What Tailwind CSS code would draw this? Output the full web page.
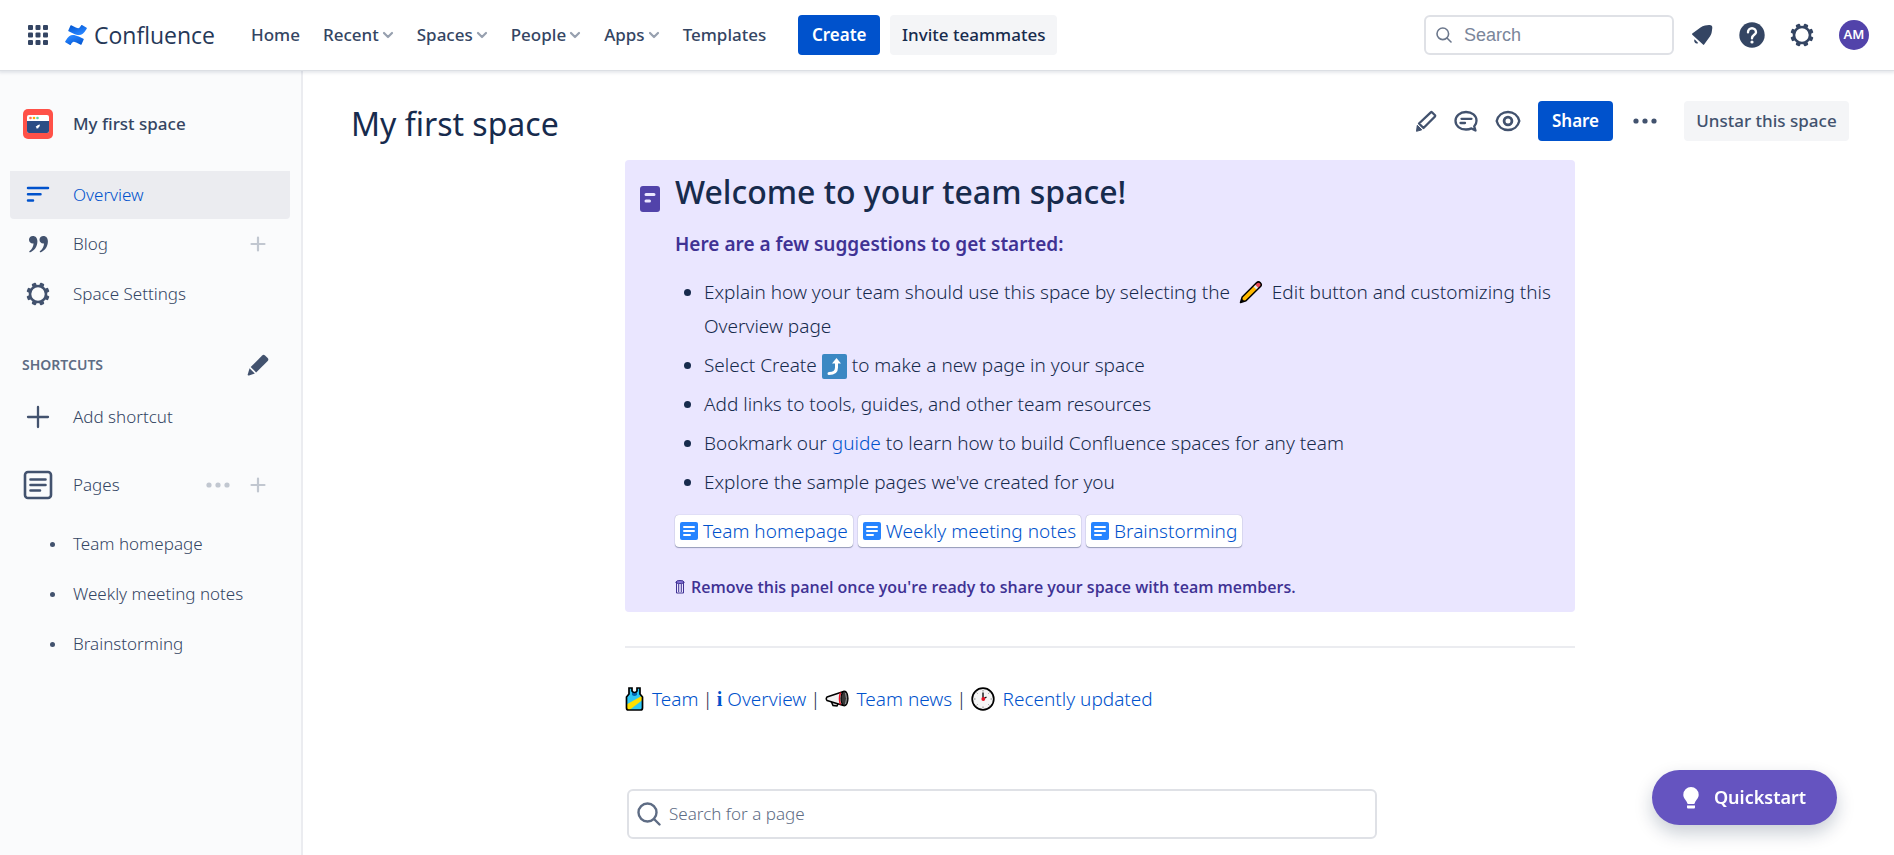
<!DOCTYPE html>
<html lang="en">
<head>
  <meta charset="UTF-8" />
  <meta name="viewport" content="width=device-width, initial-scale=1.0"/>
  <title>My first space - Confluence</title>
  <script src="https://cdn.jsdelivr.net/npm/@tailwindcss/browser@4"></script>
</head>
<body class="min-h-screen flex flex-col bg-white font-['Noto_Sans','Open_Sans',sans-serif] text-[#172B4D]">

  <!-- Shared icons -->
  <svg class="hidden" xmlns="http://www.w3.org/2000/svg">
    <symbol id="chevron" viewBox="0 0 12 12"><path d="M2 4l4 4 4-4" fill="none" stroke="currentColor" stroke-width="2.200" stroke-linecap="round" stroke-linejoin="round"/></symbol>
    <symbol id="gear" viewBox="0 0 24 24">
      <circle cx="12" cy="12" r="7.400" fill="none" stroke="currentColor" stroke-width="2.400"/>
      <g fill="currentColor">
        <rect x="9.900" y="1.300" width="4.200" height="4" rx="1" transform="rotate(22.500 12 12)"/>
        <rect x="9.900" y="1.300" width="4.200" height="4" rx="1" transform="rotate(67.500 12 12)"/>
        <rect x="9.900" y="1.300" width="4.200" height="4" rx="1" transform="rotate(112.500 12 12)"/>
        <rect x="9.900" y="1.300" width="4.200" height="4" rx="1" transform="rotate(157.500 12 12)"/>
        <rect x="9.900" y="1.300" width="4.200" height="4" rx="1" transform="rotate(202.500 12 12)"/>
        <rect x="9.900" y="1.300" width="4.200" height="4" rx="1" transform="rotate(247.500 12 12)"/>
        <rect x="9.900" y="1.300" width="4.200" height="4" rx="1" transform="rotate(292.500 12 12)"/>
        <rect x="9.900" y="1.300" width="4.200" height="4" rx="1" transform="rotate(337.500 12 12)"/>
      </g>
    </symbol>
    <symbol id="plus" viewBox="0 0 16 16"><path d="M8 1.500v13M1.500 8h13" stroke="currentColor" stroke-width="2.200" stroke-linecap="round"/></symbol>
    <symbol id="dots" viewBox="0 0 24 6"><g fill="currentColor"><circle cx="3" cy="3" r="2.600"/><circle cx="12" cy="3" r="2.600"/><circle cx="21" cy="3" r="2.600"/></g></symbol>
    <symbol id="page" viewBox="0 0 18 18"><rect width="18" height="18" rx="2" fill="#2684FF"/><path d="M4 5h10M4 9h10M4 13h6" stroke="#fff" stroke-width="2" stroke-linecap="round"/></symbol>
  </svg>

  <header class="relative z-10 h-[70px] shrink-0 flex items-center pl-7 pr-[25px] bg-white shadow-[0_1px_0_#DCDFE4,0_2px_3px_1px_rgba(9,30,66,0.10)]">
    <button type="button" aria-label="Switch to" class="text-[#344563]">
      <svg class="w-5 h-5" viewBox="0 0 20 20" fill="currentColor">
        <rect width="5" height="5" rx="1"/><rect x="7.500" width="5" height="5" rx="1"/><rect x="15" width="5" height="5" rx="1"/>
        <rect y="7.500" width="5" height="5" rx="1"/><rect x="7.500" y="7.500" width="5" height="5" rx="1"/><rect x="15" y="7.500" width="5" height="5" rx="1"/>
        <rect y="15" width="5" height="5" rx="1"/><rect x="7.500" y="15" width="5" height="5" rx="1"/><rect x="15" y="15" width="5" height="5" rx="1"/>
      </svg>
    </button>
    <a href="#" class="ml-[17px] flex items-center gap-[7px] w-[186px] font-['Open_Sans',sans-serif] text-[23px] leading-7 text-[#253858]">
      <svg class="w-[22px] h-5 shrink-0" viewBox="0 0 22 20">
        <defs>
          <linearGradient id="lg1" x1="1" y1="1" x2=".3" y2="0"><stop offset="0" stop-color="#0052CC"/><stop offset=".9" stop-color="#2684FF"/></linearGradient>
          <linearGradient id="lg2" x1="0" y1="0" x2=".7" y2="1"><stop offset="0" stop-color="#0052CC"/><stop offset=".9" stop-color="#2684FF"/></linearGradient>
        </defs>
        <path fill="url(#lg1)" d="M.8 15.400l-.6 1a.6.6 0 00.2.8l4.600 2.700a.6.6 0 00.8-.2c1.900-3.100 2.400-3.600 5.400-2.100l4.500 2.100a.6.6 0 00.8-.3l2.200-4.800a.6.6 0 00-.3-.8L13.800 11.600C7.700 8.700 4.500 9.200.8 15.400z"/>
        <path fill="url(#lg2)" d="M21.200 4.600l.6-1a.6.6 0 00-.2-.8L17 .1a.6.6 0 00-.8.2c-1.900 3.100-2.400 3.600-5.400 2.100L6.300.3a.6.6 0 00-.8.3L3.300 5.400a.6.6 0 00.3.8l4.600 2.200c6.100 2.900 9.300 2.400 13-3.800z"/>
      </svg>
      Confluence
    </a>
    <nav class="flex items-center gap-[23px] text-[17px] font-medium text-[#344563]">
      <a href="#">Home</a>
      <button type="button" class="flex items-center gap-[3px]">Recent <svg class="w-3 h-3 text-[#97A0AF]"><use href="#chevron"/></svg></button>
      <button type="button" class="flex items-center gap-[3px]">Spaces <svg class="w-3 h-3 text-[#97A0AF]"><use href="#chevron"/></svg></button>
      <button type="button" class="flex items-center gap-[3px]">People <svg class="w-3 h-3 text-[#97A0AF]"><use href="#chevron"/></svg></button>
      <button type="button" class="flex items-center gap-[3px]">Apps <svg class="w-3 h-3 text-[#97A0AF]"><use href="#chevron"/></svg></button>
      <a href="#">Templates</a>
    </nav>
    <div class="ml-8 flex gap-[10px] text-[17px]">
      <button type="button" class="h-10 w-[82px] rounded bg-[#0052CC] font-semibold text-white">Create</button>
      <button type="button" class="h-10 w-[167px] rounded bg-[#F4F5F7] font-medium">Invite teammates</button>
    </div>
    <label class="ml-auto w-[250px] h-10 flex items-center gap-3 px-[10px] rounded-md border-2 border-[#DFE1E6] text-[#6B778C]">
      <svg class="w-4 h-4 shrink-0" viewBox="0 0 16 16" fill="none" stroke="currentColor" stroke-width="1.600" stroke-linecap="round"><circle cx="6.800" cy="6.800" r="5.800"/><path d="M11 11l4 4"/></svg>
      <input type="text" aria-label="Search" placeholder="Search" class="min-w-0 flex-1 bg-transparent outline-none font-['Liberation_Sans',sans-serif] text-[18px] placeholder:text-[#7A869A]">
    </label>
    <div class="ml-4 flex items-center text-[#344563]">
      <button type="button" aria-label="Notifications">
        <svg class="w-6 h-6" viewBox="0 0 24 24" fill="currentColor"><path d="M2.300 10.600l8.200-6q2-1.600 4.500-2l4-.5q3.600-.2 3.300 3l-.6 4.200q-.3 2.200-1.600 4l-6 8.300q-.5.600-1.100 0L2.300 11.700q-.6-.6 0-1.100z"/><path d="M4.600 16.300l3.600 3.600q-1.800 1.200-3.200-.2-1.500-1.600-.4-3.400z"/></svg>
      </button>
      <button type="button" aria-label="Help" class="ml-[25px]">
        <svg class="w-[26px] h-[26px]" viewBox="0 0 26 26"><circle cx="13" cy="13" r="12.700" fill="currentColor"/><path d="M9 10.200a4 4 0 118 0c0 2.600-4 2.700-4 6" fill="none" stroke="#fff" stroke-width="2.400" stroke-linecap="round"/><circle cx="13" cy="20" r="1.600" fill="#fff"/></svg>
      </button>
      <button type="button" aria-label="Settings" class="ml-6"><svg class="w-[26px] h-[26px]"><use href="#gear"/></svg></button>
      <button type="button" aria-label="Profile" class="ml-6 w-[30px] h-[30px] rounded-full bg-[#5243AA] text-[13px] font-semibold text-white">AM</button>
    </div>
  </header>

  <div class="flex flex-1">
    <aside class="w-[303px] shrink-0 border-r-2 border-[#EBECF0] bg-[#FAFBFC] pt-[39px] px-[10px] text-[17px] font-light text-[#344563]">
      <a href="#" class="flex items-center pl-[13px] font-medium">
        <svg class="w-[30px] h-[30px] mr-5" viewBox="0 0 30 30">
          <rect width="30" height="30" rx="5" fill="#FF5148"/>
          <rect x="4" y="6" width="22" height="18" rx="2" fill="#fff"/>
          <path d="M4 12h22v10q0 2-2 2H6q-2 0-2-2z" fill="#2B4D85"/>
          <circle cx="7.500" cy="9" r="1.300" fill="#FF7452"/><circle cx="11" cy="9" r="1.300" fill="#FFAB00"/><circle cx="14.500" cy="9" r="1.300" fill="#57D9A3"/>
          <path d="M17 15.500q-2.400 0-3.200 1.600l-1.200.3.800.900-.4 1.200 1.200-.4.800.8.300-1.200q1.600-.8 1.700-3.200z" fill="#fff"/>
        </svg>
        My first space
      </a>

      <nav class="mt-8">
        <a href="#" class="h-12 w-[280px] flex items-center pl-4 rounded-b bg-[#EBECF0] text-[#0052CC]">
          <svg class="w-6 h-6 mr-[23px]" viewBox="0 0 24 24" stroke="currentColor" stroke-width="2.500" stroke-linecap="round"><path d="M2 5h20M2 11.200h12.500M2 17.500h5"/></svg>
          Overview
        </a>
        <div class="h-[50px] flex items-center pl-4 pr-[25px]">
          <svg class="w-6 h-6 mr-[23px]" viewBox="0 0 24 24" fill="#42526E"><path id="quote" d="M3 7.700C3 5.500 4.700 4 6.900 4c2.800 0 4.500 2.200 4.500 5.400 0 5.100-3.100 9-7 10.800-.9.400-1.700-.6-.8-1.200 2.100-1.500 3.600-4 4-7.600-3 .3-4.600-1.600-4.600-3.700z"/><use href="#quote" x="10.500"/></svg>
          <a href="#">Blog</a>
          <button type="button" aria-label="Create blog" class="ml-auto text-[#C1C7D0]"><svg class="w-4 h-4"><use href="#plus"/></svg></button>
        </div>
        <a href="#" class="h-[50px] flex items-center pl-[15px]">
          <svg class="w-[26px] h-[26px] mr-[22px] text-[#42526E]"><use href="#gear"/></svg>
          Space Settings
        </a>
      </nav>

      <div class="mt-[34px] flex items-center justify-between pl-3 pr-[21px]">
        <h2 class="text-[14px] leading-6 font-semibold text-[#5E6C84]">SHORTCUTS</h2>
        <button type="button" aria-label="Edit shortcuts" class="text-[#42526E]">
          <svg class="w-6 h-6" viewBox="0 0 24 24" fill="currentColor"><path d="M16.200 2.400q1.400-1.300 2.800 0l2.700 2.700q1.300 1.400 0 2.800L10.100 19.400 4.700 14z"/><path d="M3.600 15.300l5.200 5.200-5.800 1.900q-1.600.4-1.200-1.200z"/></svg>
        </button>
      </div>
      <button type="button" class="mt-4 h-12 flex items-center pl-4">
        <svg class="w-6 h-6 mr-[23px]" viewBox="0 0 24 24" stroke="#42526E" stroke-width="2.300" stroke-linecap="round"><path d="M12 2v20M2 12h20"/></svg>
        Add shortcut
      </button>

      <div class="mt-5 h-12 flex items-center pl-[13px] pr-[25px]">
        <svg class="w-[30px] h-[30px] mr-5" viewBox="0 0 30 30" fill="none" stroke="#42526E" stroke-linecap="round"><rect x="2" y="2" width="26" height="26" rx="3" stroke-width="2.600"/><path d="M7.500 9.500h15M7.500 15h15M7.500 20.500h9.500" stroke-width="2.600"/></svg>
        <a href="#">Pages</a>
        <button type="button" aria-label="More actions" class="ml-auto text-[#C1C7D0]"><svg class="w-6 h-[6px]"><use href="#dots"/></svg></button>
        <button type="button" aria-label="Create page" class="ml-5 text-[#C1C7D0]"><svg class="w-4 h-4"><use href="#plus"/></svg></button>
      </div>
      <ul class="mt-[10px]">
        <li class="h-[50px] flex items-center pl-10"><span class="w-[5px] h-[5px] rounded-full bg-[#42526E] mr-[18px]"></span><a href="#">Team homepage</a></li>
        <li class="h-[50px] flex items-center pl-10"><span class="w-[5px] h-[5px] rounded-full bg-[#42526E] mr-[18px]"></span><a href="#">Weekly meeting notes</a></li>
        <li class="h-[50px] flex items-center pl-10"><span class="w-[5px] h-[5px] rounded-full bg-[#42526E] mr-[18px]"></span><a href="#">Brainstorming</a></li>
      </ul>
    </aside>

    <main class="flex-1 min-w-0 pt-[31px] pl-12 pr-[45px]">
      <div class="h-10 flex items-center text-[#42526E]">
        <h1 class="text-[32px] leading-10 text-[#172B4D] pt-[6px]">My first space</h1>
        <div class="ml-auto flex items-center text-[17px]">
          <button type="button" aria-label="Edit"><svg class="w-6 h-6" viewBox="0 0 24 24" fill="none" stroke="currentColor" stroke-width="2.300" stroke-linejoin="round"><path d="M16.800 3.300q.6-.5 1.200 0l3 3q.5.6 0 1.200L9.500 19 5 14.500z"/><path d="M3.300 16.300l4.500 4.500L2.500 22.300z" fill="currentColor" stroke-width="1"/></svg></button>
          <button type="button" aria-label="Comments" class="ml-4"><svg class="w-6 h-6" viewBox="0 0 24 24" fill="none" stroke="currentColor" stroke-width="2.300" stroke-linecap="round" stroke-linejoin="round"><path d="M17.500 19.400c-1.600.7-3.500 1.100-5.500 1.100-6 0-10.500-3.700-10.500-8.700S6 3 12 3s10.500 3.700 10.500 8.700c0 2.200-.8 4.200-2.300 5.600l1.300 4.200z"/><path d="M7.500 9.800h10M6.500 14h4.500"/></svg></button>
          <button type="button" aria-label="Watch" class="ml-[17px]"><svg class="w-[26px] h-[26px]" viewBox="0 0 26 26" fill="none" stroke="currentColor" stroke-width="2.400"><path d="M1.700 13C3 7.500 7.500 4 13 4s10 3.500 11.300 9C23 18.500 18.500 22 13 22S3 18.500 1.700 13z"/><circle cx="13" cy="13" r="3.900" stroke-width="2.800"/></svg></button>
          <button type="button" class="ml-[17px] h-10 w-[75px] rounded bg-[#0052CC] font-semibold text-white">Share</button>
          <button type="button" aria-label="More" class="ml-5"><svg class="w-6 h-[6px]"><use href="#dots"/></svg></button>
          <button type="button" class="ml-[27px] h-10 w-[165px] rounded bg-[#F4F5F7] font-medium">Unstar this space</button>
        </div>
      </div>

      <div class="mt-[19px] mx-auto max-w-[950px] text-[19px] leading-[34px] font-light">
        <section class="rounded bg-[#EAE6FF] flex pl-[15px] pr-[10px] pt-[14px] pb-2">
          <svg class="w-5 h-[26px] mt-3 mr-[15px] shrink-0" viewBox="0 0 20 26"><rect width="20" height="26" rx="3" fill="#5243AA"/><path d="M6 8.500h8M6 15h3.500" stroke="#EAE6FF" stroke-width="3" stroke-linecap="round"/></svg>
          <div>
            <h2 class="text-[32px] leading-9 font-medium">Welcome to your team space!</h2>
            <p class="mt-[17px] font-semibold text-[#403294]">Here are a few suggestions to get started:</p>
            <ul class="mt-[14px] pl-[29px] space-y-[5px] list-disc">
              <li>Explain how your team should use this space by selecting the
                <svg class="inline w-6 h-6 mx-1 align-[-5px]" viewBox="0 0 24 24"><path d="M1.500 22.500l1.700-5.500L17.500 2.700q2-1.700 3.800 0 1.900 1.900.2 3.800L7 20.800z" fill="#FFB900"/><path d="M15.800 4.400l1.700-1.700q2-1.700 3.800 0 1.900 1.900.2 3.800L19.700 8.200z" fill="#E74856"/><path d="M14 6.200l1.800-1.800 3.900 3.800L17.900 10z" fill="#E8E8E8"/><path d="M1.500 22.500l1.200-4 2.800 2.800z"/><path d="M1.500 22.500l1.700-5.500L17.500 2.700q2-1.700 3.800 0 1.900 1.900.2 3.800L7 20.800z" fill="none" stroke="#000" stroke-width="1.500" stroke-linejoin="round"/></svg>
                Edit button and customizing this Overview page</li>
              <li>Select Create <svg class="inline w-[25px] h-[25px] align-middle" viewBox="0 0 25 25"><rect width="25" height="25" rx="2" fill="#3B88C3"/><path d="M7 19.500c5.500 0 7.500-2 7.500-6V8" fill="none" stroke="#fff" stroke-width="3" stroke-linecap="round"/><path d="M10 9.500L14.500 4 19 9.500z" fill="#fff"/></svg> to make a new page in your space</li>
              <li>Add links to tools, guides, and other team resources</li>
              <li>Bookmark our <a href="#" class="text-[#0052CC]">guide</a> to learn how to build Confluence spaces for any team</li>
              <li>Explore the sample pages we've created for you</li>
            </ul>
            <div class="mt-4 flex gap-[5px] leading-8 text-[#0052CC]">
              <a href="#" class="h-8 flex items-center gap-[5px] px-[5px] rounded bg-white shadow-[0_1px_1px_rgba(9,30,66,0.35),0_0_1px_rgba(9,30,66,0.4)]"><svg class="w-[18px] h-[18px]"><use href="#page"/></svg>Team homepage</a>
              <a href="#" class="h-8 flex items-center gap-[5px] px-[5px] rounded bg-white shadow-[0_1px_1px_rgba(9,30,66,0.35),0_0_1px_rgba(9,30,66,0.4)]"><svg class="w-[18px] h-[18px]"><use href="#page"/></svg>Weekly meeting notes</a>
              <a href="#" class="h-8 flex items-center gap-[5px] px-[5px] rounded bg-white shadow-[0_1px_1px_rgba(9,30,66,0.35),0_0_1px_rgba(9,30,66,0.4)]"><svg class="w-[18px] h-[18px]"><use href="#page"/></svg>Brainstorming</a>
            </div>
            <p class="mt-[23px] flex items-center gap-[6px] font-['Open_Sans',sans-serif] text-[16px] font-semibold text-[#403294]">
              <svg class="w-[10px] h-[14px]" viewBox="0 0 10 14" fill="none" stroke="currentColor"><path d="M.5 2.500h9M1.500 3v10h7V3M3.700 4v8M6.300 4v8"/><ellipse cx="5" cy="2" rx="4" ry="1.500" fill="#8777D9"/></svg>
              Remove this panel once you're ready to share your space with team members.
            </p>
          </div>
        </section>

        <hr class="mt-[34px] border-t-2 border-[#EBECF0]">

        <div class="mt-[34px] flex items-center gap-1">
          <a href="#" class="flex items-center gap-2 text-[#0052CC]">
            <svg class="w-[19px] h-6" viewBox="0 0 19 24"><path d="M4 1h3v3q2.500 3 5 0V1h3v6l2.500 3v11q0 2-2 2h-12q-2 0-2-2V10L4 7z" fill="#30C8F6"/><path d="M7 4q2.500 3 5 0v4q-2.500 2-5 0z" fill="#0063B1"/><path d="M1.500 17.500l16-9V13L4.500 23h-3z" fill="#FFE000"/><path d="M4 1h3v3q2.500 3 5 0V1h3v6l2.500 3v11q0 2-2 2h-12q-2 0-2-2V10L4 7z" fill="none" stroke="#000" stroke-width="1.700"/></svg>
            Team
          </a>
          <span>|</span>
          <a href="#" class="flex items-center gap-[5px] text-[#0052CC]"><span class="font-['Liberation_Serif',serif] font-bold text-[20px]">i</span>Overview</a>
          <span>|</span>
          <a href="#" class="flex items-center gap-2 text-[#0052CC]">
            <svg class="w-6 h-6" viewBox="0 0 24 24"><path d="M6 14l2 4.500 4 .5 1.500-3" fill="#ccc" stroke="#000" stroke-width="1.500"/><path d="M2 10L18.500 4.500v14L2 13.500q-1.500-1.700 0-3.500z" fill="#F2F2F2" stroke="#000" stroke-width="1.500" stroke-linejoin="round"/><path d="M15.500 5.500q-2 6.500 0 12" fill="none" stroke="#E81123" stroke-width="1.500"/><ellipse cx="19.500" cy="11.500" rx="3.500" ry="7.300" fill="#383838" stroke="#000" stroke-width="1.200"/><path d="M20.500 6q2 5.500 0 11" fill="none" stroke="#999"/></svg>
            Team news
          </a>
          <span>|</span>
          <a href="#" class="flex items-center gap-2 text-[#0052CC]">
            <svg class="w-6 h-6" viewBox="0 0 24 24"><circle cx="12" cy="12" r="10.800" fill="#F5F5F5" stroke="#000" stroke-width="1.700"/><path d="M12 3v1.500M12 19.500V21M3 12h1.500M19.500 12H21M5.600 5.600l1 1M17.400 17.400l1 1M5.600 18.400l1-1M17.400 6.600l1-1" stroke="#888"/><path d="M12 5.500V12l3.500-2" fill="none" stroke="#111" stroke-width="1.400"/><circle cx="12.300" cy="12" r="1.900" fill="#E81123"/></svg>
            Recently updated
          </a>
        </div>

        <label class="mt-[73px] ml-[2px] w-[750px] max-w-full h-[50px] flex items-center gap-2 px-2 rounded-md border-2 border-[#DFE1E6] text-[#5E6C84]">
          <svg class="w-6 h-6 shrink-0" viewBox="0 0 24 24" fill="none" stroke="currentColor" stroke-width="2.400" stroke-linecap="round"><circle cx="10.500" cy="10.500" r="9"/><path d="M17 17l5.500 5.500"/></svg>
          <input type="text" aria-label="Search for a page" placeholder="Search for a page" class="min-w-0 flex-1 bg-transparent outline-none text-[17px] placeholder:text-[#5E6C84]">
        </label>
      </div>
    </main>
  </div>

  <button type="button" class="fixed right-[57px] bottom-[30px] h-[55px] w-[185px] flex items-center justify-center gap-[15px] rounded-full bg-[#6554C0] text-[18px] font-semibold text-white shadow-[0_8px_18px_rgba(9,30,66,0.22)]">
    <svg class="w-4 h-[22px]" viewBox="0 0 16 22" fill="#fff"><path d="M8 0a7.700 7.700 0 017.700 7.700c0 3.500-2.700 5-3.700 7.800-.3 1-.7 1.500-1.500 1.500h-5c-.8 0-1.200-.5-1.500-1.500-1-2.800-3.700-4.300-3.700-7.800A7.700 7.700 0 018 0z"/><path d="M4 18.500h8v2q0 1-1 1H5q-1 0-1-1z"/></svg>
    Quickstart
  </button>
</body>
</html>
